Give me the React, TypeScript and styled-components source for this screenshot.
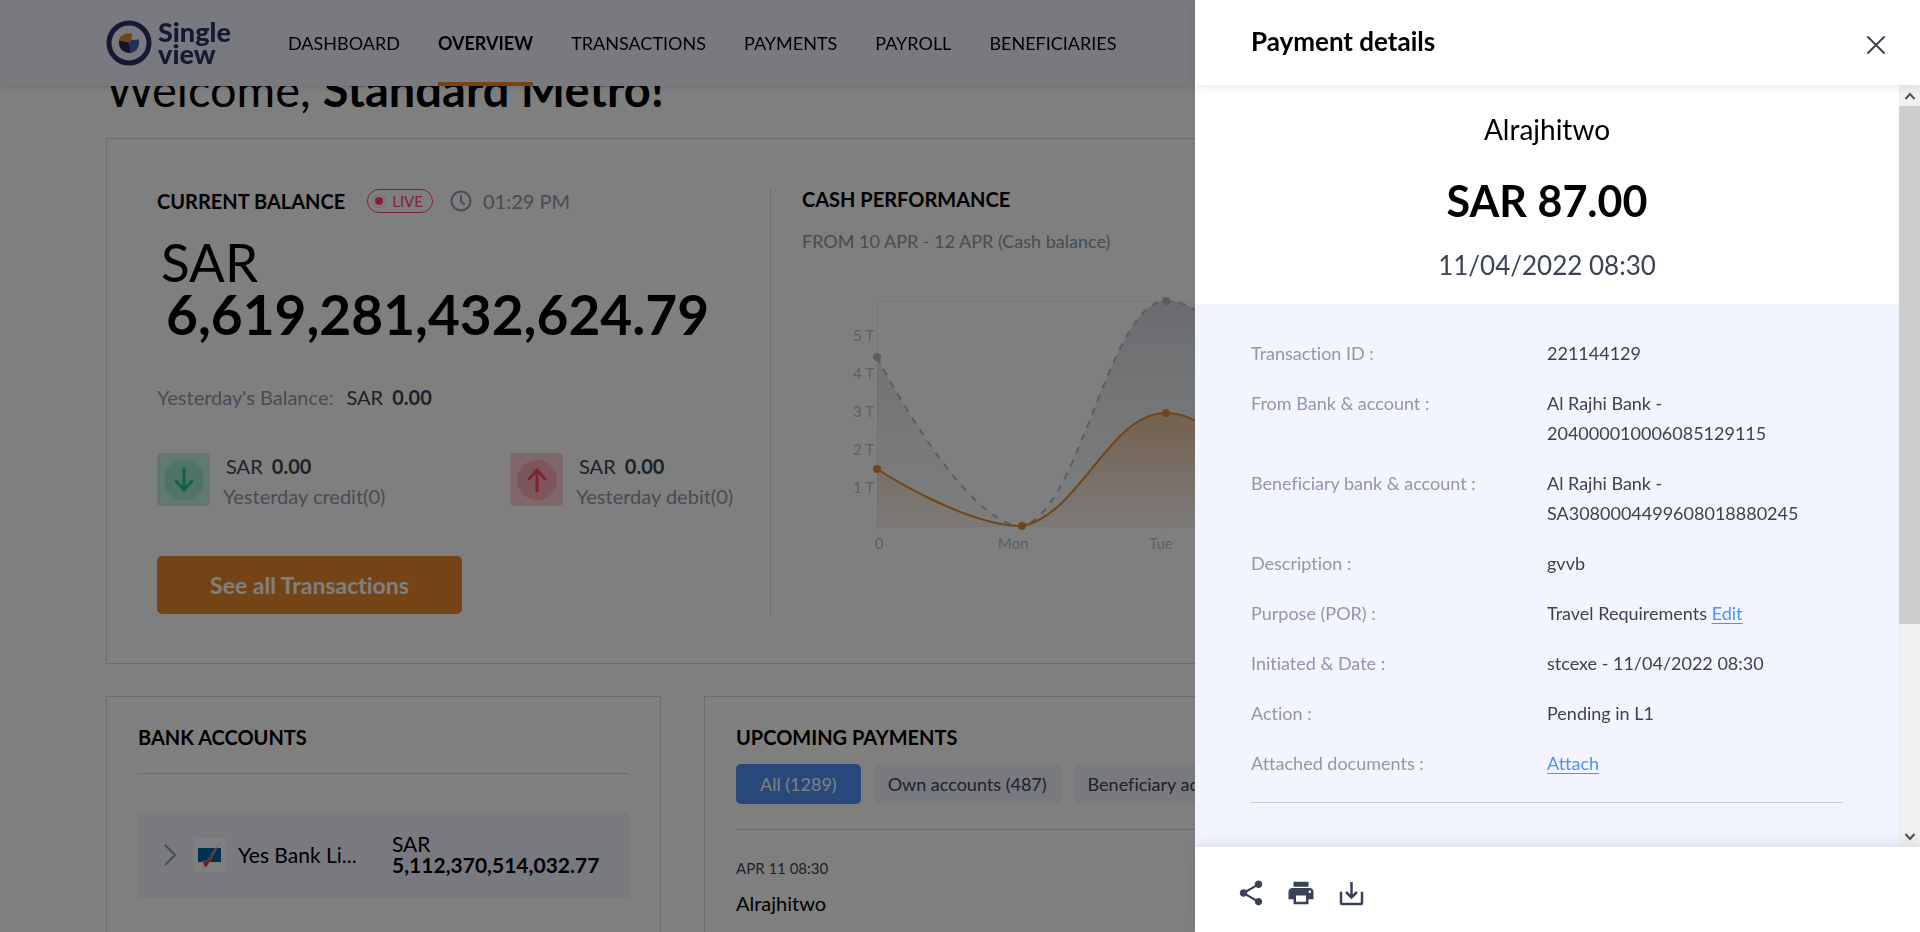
import React from "react";
import styled, { createGlobalStyle, css } from "styled-components";
import { MdPrint, MdShare } from "react-icons/md";

const ink = "#3a4354";
const muted = "#8e98aa";
const line = "#d3d6df";
const pale = "#f2f5fe";
const orange = "#e8892c";
const blue = "#5090f8";
const red = "#ff4468";

const GlobalStyle = createGlobalStyle`
  *, *::before, *::after { box-sizing: border-box; }
  html, body { margin: 0; height: 100%; }
  body {
    font-family: Lato, "Liberation Sans", sans-serif;
    font-variant-ligatures: none;
    color: #000;
    background: #fff;
    overflow: hidden;
  }
  button { font-family: inherit; font-variant-ligatures: none; cursor: pointer; }
  h1, h2, h3, p, dl, dd, dt { margin: 0; }
`;

const Page = styled.div`
  height: 100vh;
  overflow: hidden;
`;

const TopBar = styled.header`
  position: fixed;
  inset: 0 0 auto 0;
  z-index: 2;
  display: flex;
  height: 86px;
  padding: 0 106px;
  gap: 56px;
  background: ${pale};
  box-shadow: 0 1px 8px rgba(0, 0, 0, 0.14);
`;

const Brand = styled.a`
  display: flex;
  align-items: center;
  gap: 6px;
  color: #2c3262;
  text-decoration: none;
`;

const BrandName = styled.span`
  width: 74px;
  font-size: 27px;
  font-weight: 900;
  line-height: 22px;
`;

const Nav = styled.nav`
  display: flex;
  gap: 38px;
`;

const NavLink = styled.a<{ $active?: boolean }>`
  display: flex;
  align-items: center;
  padding-top: 3px;
  border-bottom: 4px solid ${(p) => (p.$active ? orange : "transparent")};
  color: #000;
  font-size: 18px;
  font-weight: ${(p) => (p.$active ? 700 : 400)};
  text-decoration: none;
`;

const Main = styled.main`
  padding: 59px 106px 0;
`;

const Title = styled.h1`
  margin-bottom: 19px;
  font-size: 47px;
  font-weight: 400;
  line-height: 60px;
  white-space: nowrap;
`;

const Card = styled.section`
  border: 1px solid ${line};
  background: #fff;
`;

const SummaryCard = styled(Card)`
  display: flex;
  padding: 50px 50px 49px;
  margin-bottom: 32px;
`;

const Balance = styled.div`
  flex: 0 0 614px;
  border-right: 1px solid ${line};
`;

const Cash = styled.div`
  flex: 1;
  min-width: 0;
  padding-left: 31px;
  overflow: hidden;
`;

const Heading = styled.h2`
  font-size: 20px;
  font-weight: 700;
  line-height: 20px;
`;

const HeadingRow = styled.div`
  display: flex;
  align-items: center;
  height: 24px;
  margin-bottom: 23px;
`;

const LivePill = styled.span`
  display: flex;
  align-items: center;
  gap: 7px;
  height: 24px;
  margin: 0 17px 0 22px;
  padding: 0 9px 0 5px;
  border: 1px solid ${red};
  border-radius: 12px;
  color: ${red};
  font-size: 15px;
`;

const LiveDot = styled.i`
  width: 12px;
  height: 12px;
  border: 2px solid #fff;
  border-radius: 50%;
  background: ${red};
  box-shadow: 0 0 0 1px #eadde2;
`;

const Time = styled.time`
  margin-left: 11px;
  color: ${muted};
  font-size: 20px;
`;

const Total = styled.p`
  padding-left: 4px;
  margin-bottom: 45px;
  font-size: 53px;
  line-height: 52px;
`;

const TotalValue = styled.strong`
  display: block;
  padding-left: 5px;
  font-size: 55px;
`;

const Yesterday = styled.p`
  display: flex;
  gap: 13px;
  margin-bottom: 42px;
  color: ${muted};
  font-size: 20px;
  line-height: 24px;
`;

const Amount = styled.span`
  color: ${ink};
  strong { padding-left: 4px; }
`;

const Stats = styled.div`
  display: grid;
  grid-template-columns: 353px 1fr;
  margin-bottom: 45px;
`;

const Stat = styled.div`
  display: flex;
  gap: 13px;
  color: ${muted};
  font-size: 20px;
  line-height: 30px;
  white-space: nowrap;
  ${Amount} { padding-left: 3px; }
`;

const StatIcon = styled.span<{ $tone: "credit" | "debit" }>`
  display: grid;
  place-items: center;
  width: 53px;
  height: 53px;
  margin-top: 2px;
  border-radius: 4px;
  ${(p) =>
    p.$tone === "credit"
      ? css`background: #c2f3e0; color: #24c48c; --disc: #9fe6cc;`
      : css`background: #ffd0d8; color: ${red}; --disc: #ffaab8;`}
`;

const StatDisc = styled.span`
  display: grid;
  place-items: center;
  width: 40px;
  height: 40px;
  border-radius: 50%;
  background: var(--disc);
`;

const SeeAll = styled.button`
  display: block;
  width: 305px;
  height: 58px;
  border: 0;
  border-radius: 5px;
  background: ${orange};
  color: #fff;
  font-size: 23px;
  font-weight: 700;
`;

const CashPeriod = styled.p`
  margin: 20px 0 24px;
  color: ${muted};
  font-size: 18px;
  line-height: 24px;
`;

const AxisText = styled.text`
  fill: #bcc0ca;
  font-size: 15px;
`;

const LowerRow = styled.div`
  display: grid;
  grid-template-columns: 555px 1fr;
  gap: 43px;
`;

const PanelCard = styled(Card)`
  min-height: 400px;
  padding: 30px 31px;
`;

const Rule = styled.hr`
  height: 1px;
  margin: 0;
  border: 0;
  background: ${line};
`;

const BankRule = styled(Rule)`
  margin: 26px 0 38px;
`;

const BankRow = styled.div`
  display: flex;
  align-items: center;
  height: 86px;
  padding: 0 26px;
  background: ${pale};
  font-size: 21px;
`;

const BankLogo = styled.span`
  display: grid;
  place-items: center;
  width: 33px;
  height: 34px;
  margin: 0 12px 0 17px;
  background: #fff;
`;

const BankName = styled.span`
  width: 124px;
  margin-right: 30px;
  padding-bottom: 2px;
  white-space: nowrap;
`;

const BankAmount = styled.span`
  padding-bottom: 2px;
  line-height: 21px;
  strong { display: block; }
`;

const Tabs = styled.div`
  display: flex;
  gap: 13px;
  margin: 17px 0 25px;
`;

const Tab = styled.button<{ $active?: boolean }>`
  height: 40px;
  padding: 0 ${(p) => (p.$active ? 24 : 14)}px;
  border: 0;
  border-radius: 5px;
  background: ${(p) => (p.$active ? blue : pale)};
  color: ${(p) => (p.$active ? "#fff" : ink)};
  font-size: 18px;
  white-space: nowrap;
`;

const PaymentDate = styled.p`
  margin: 28px 0 13px;
  color: ${ink};
  font-size: 15px;
  line-height: 20px;
`;

const Payee = styled.p`
  font-size: 20px;
  line-height: 24px;
`;

const Backdrop = styled.div`
  position: fixed;
  inset: 0;
  z-index: 3;
  background: rgba(0, 0, 0, 0.5);
`;

const Drawer = styled.aside`
  position: fixed;
  inset: 0 0 0 auto;
  z-index: 4;
  display: flex;
  flex-direction: column;
  width: 725px;
  background: #fff;
`;

const DrawerHeader = styled.header`
  position: relative;
  z-index: 1;
  display: flex;
  align-items: center;
  justify-content: space-between;
  height: 85px;
  padding: 0 34px 0 56px;
  background: #fff;
  box-shadow: 0 2px 10px rgba(40, 50, 80, 0.1);
`;

const DrawerTitle = styled.h2`
  padding-bottom: 3px;
  font-size: 26px;
  font-weight: 700;
  line-height: 28px;
`;

const IconButton = styled.button`
  display: grid;
  place-items: center;
  padding: 0;
  border: 0;
  background: none;
  color: ${ink};
`;

const CloseButton = styled(IconButton)`
  padding-top: 5px;
`;

const DrawerBody = styled.div`
  display: flex;
  flex: 1;
  min-height: 0;
`;

const DrawerContent = styled.div`
  display: flex;
  flex: 1;
  flex-direction: column;
  overflow: hidden;
`;

const Hero = styled.div`
  display: flex;
  flex-direction: column;
  align-items: center;
  padding: 27px 0 22px;
`;

const HeroText = styled.p`
  font-size: 28px;
  line-height: 34px;
`;

const HeroDate = styled.p`
  color: ${ink};
  font-size: 26px;
  line-height: 34px;
`;

const HeroAmount = styled.p`
  margin: 30px 0 22px;
  font-size: 43px;
  font-weight: 700;
  line-height: 50px;
`;

const Details = styled.div`
  flex: 1;
  padding: 34px 56px 0;
  background: ${pale};
`;

const DetailList = styled.dl`
  display: grid;
  grid-template-columns: 1fr 1fr;
  row-gap: 20px;
  margin-bottom: 24px;
  font-size: 18px;
  line-height: 30px;
`;

const Term = styled.dt`
  color: ${muted};
`;

const Value = styled.dd`
  color: ${ink};
  a { color: ${blue}; text-underline-offset: 3px; }
`;

const DetailRule = styled(Rule)`
  background: #c4c9d6;
`;

const ScrollBar = styled.div`
  display: flex;
  flex-direction: column;
  width: 21px;
  background: #f0f0f0;
`;

const ScrollArrow = styled.span`
  display: grid;
  place-items: center;
  height: 21px;
`;

const ScrollTrack = styled.div`
  flex: 1;
`;

const ScrollThumb = styled.div`
  height: 72%;
  background: #cdcdcd;
`;

const DrawerFooter = styled.footer`
  position: relative;
  z-index: 1;
  display: flex;
  align-items: center;
  gap: 20px;
  height: 85px;
  padding: 6px 41px 0;
  background: #fff;
  box-shadow: 0 -2px 12px rgba(40, 50, 80, 0.12);
`;

const navItems = ["DASHBOARD", "OVERVIEW", "TRANSACTIONS", "PAYMENTS", "PAYROLL", "BENEFICIARIES"];

const details: { label: string; value: React.ReactNode }[] = [
  { label: "Transaction ID :", value: "221144129" },
  { label: "From Bank & account :", value: <>Al Rajhi Bank -<br />204000010006085129115</> },
  { label: "Beneficiary bank & account :", value: <>Al Rajhi Bank -<br />SA3080004499608018880245</> },
  { label: "Description :", value: "gvvb" },
  { label: "Purpose (POR) :", value: <>Travel Requirements <a href="#edit">Edit</a></> },
  { label: "Initiated & Date :", value: "stcexe - 11/04/2022 08:30" },
  { label: "Action :", value: "Pending in L1" },
  { label: "Attached documents :", value: <a href="#attach">Attach</a> },
];

const LogoMark = () => (
  <svg width="46" height="46" viewBox="0 0 46 46" aria-hidden="true">
    <circle cx="23" cy="23" r="20" fill="none" stroke="#2c3262" strokeWidth="5" />
    <path d="M23.500 22.500 L13 20.500 C14 15.500 19 12.500 26 13.500 L25.500 20 Z" fill={orange} />
    <path d="M23.500 22.500 L13 20.500 C12 28 17 33.500 24.500 33 Z" fill="#262a54" />
    <path d="M23.500 22.500 L25.500 20 L33 19.500 C34 27 30 32.500 24.500 33 Z" fill="#3f64b8" />
  </svg>
);

const ArrowIcon = ({ up }: { up?: boolean }) => (
  <svg width="24" height="28" viewBox="0 0 24 28" fill="none" stroke="currentColor" strokeWidth="3" strokeLinecap="round" strokeLinejoin="round" aria-hidden="true">
    {up ? <path d="M12 25 V4 M4 13 L12 4 L20 13" /> : <path d="M12 3 V24 M4 15 L12 24 L20 15" />}
  </svg>
);

const CashChart = () => (
  <svg width="760" height="300" viewBox="0 0 760 300" role="img" aria-label="Cash balance chart">
    <defs>
      <linearGradient id="previous" x1="0" y1="0" x2="0" y2="1">
        <stop offset="0" stopColor="#8e98aa" stopOpacity="0.38" />
        <stop offset="1" stopColor="#c8d4d4" stopOpacity="0.1" />
      </linearGradient>
      <linearGradient id="current" x1="0" y1="0" x2="0" y2="1">
        <stop offset="0" stopColor={orange} stopOpacity="0.45" />
        <stop offset="1" stopColor="#f0d8c8" stopOpacity="0.25" />
      </linearGradient>
    </defs>
    <path d="M75.500 24.500 H700 M75.500 24.500 V256 M75.500 249.500 H700 M220.500 249 V256 M364.500 249 V256" stroke="#eceef2" fill="none" />
    <path d="M75 80 C75 80 162 249 220 249 C278 236 307 24 364 24 C422 24 451 120 509 120 V249 H75 Z" fill="url(#previous)" />
    <path d="M75 80 C75 80 162 249 220 249 C278 236 307 24 364 24 C422 24 451 120 509 120" fill="none" stroke="#b4bac6" strokeWidth="2" strokeDasharray="7 7" />
    <path d="M75 192 C75 192 162 249 220 249 C278 238 307 136 364 136 C422 136 451 220 509 220 V249 H75 Z" fill="url(#current)" />
    <path d="M75 192 C75 192 162 249 220 249 C278 238 307 136 364 136 C422 136 451 220 509 220" fill="none" stroke={orange} strokeWidth="2" />
    <g fill="#b4bac6">
      <circle cx="75" cy="80" r="4" />
      <circle cx="364" cy="24" r="4" />
    </g>
    <g fill={orange}>
      <circle cx="75" cy="192" r="4" />
      <circle cx="220" cy="249" r="4" />
      <circle cx="364" cy="136" r="4" />
    </g>
    {[5, 4, 3, 2, 1].map((n, i) => (
      <AxisText key={n} x="72" y={64 + i * 38} textAnchor="end">{n} T</AxisText>
    ))}
    <AxisText x="77" y="272" textAnchor="middle">0</AxisText>
    <AxisText x="211" y="272" textAnchor="middle">Mon</AxisText>
    <AxisText x="359" y="272" textAnchor="middle">Tue</AxisText>
  </svg>
);

export default function App() {
  return (
    <>
      <GlobalStyle />
      <Page>
        <TopBar>
          <Brand href="#home">
            <LogoMark />
            <BrandName>Single view</BrandName>
          </Brand>
          <Nav>
            {navItems.map((item) => (
              <NavLink key={item} href={"#" + item.toLowerCase()} $active={item === "OVERVIEW"}>
                {item}
              </NavLink>
            ))}
          </Nav>
        </TopBar>

        <Main>
          <Title>Welcome, <strong>Standard Metro!</strong></Title>

          <SummaryCard>
            <Balance>
              <HeadingRow>
                <Heading>CURRENT BALANCE</Heading>
                <LivePill><LiveDot />LIVE</LivePill>
                <svg width="22" height="22" viewBox="0 0 22 22" fill="none" stroke={muted} strokeWidth="2" strokeLinecap="round" aria-hidden="true">
                  <circle cx="11" cy="11" r="9.500" />
                  <path d="M11 6 V11.500 L14 14" />
                </svg>
                <Time>01:29 PM</Time>
              </HeadingRow>
              <Total>SAR <TotalValue>6,619,281,432,624.79</TotalValue></Total>
              <Yesterday>Yesterday's Balance: <Amount>SAR <strong>0.00</strong></Amount></Yesterday>
              <Stats>
                <Stat>
                  <StatIcon $tone="credit"><StatDisc><ArrowIcon /></StatDisc></StatIcon>
                  <div><Amount>SAR <strong>0.00</strong></Amount><p>Yesterday credit(0)</p></div>
                </Stat>
                <Stat>
                  <StatIcon $tone="debit"><StatDisc><ArrowIcon up /></StatDisc></StatIcon>
                  <div><Amount>SAR <strong>0.00</strong></Amount><p>Yesterday debit(0)</p></div>
                </Stat>
              </Stats>
              <SeeAll type="button">See all Transactions</SeeAll>
            </Balance>
            <Cash>
              <Heading>CASH PERFORMANCE</Heading>
              <CashPeriod>FROM 10 APR - 12 APR (Cash balance)</CashPeriod>
              <CashChart />
            </Cash>
          </SummaryCard>

          <LowerRow>
            <PanelCard>
              <Heading>BANK ACCOUNTS</Heading>
              <BankRule />
              <BankRow>
                <svg width="12" height="22" viewBox="0 0 12 22" fill="none" stroke={muted} strokeWidth="2" strokeLinecap="round" aria-hidden="true">
                  <path d="M1.500 1.500 L11 11 L1.500 20.500" />
                </svg>
                <BankLogo>
                  <svg width="24" height="24" viewBox="0 0 24 24" aria-hidden="true">
                    <rect x="0" y="5" width="23" height="14" fill="#00629e" />
                    <path d="M4.500 18 L8.500 18.500 L21.500 0 L11 20 L8.500 24 L6.500 24 Z" fill="#e23038" stroke="#e8d8dc" strokeWidth="0.600" />
                  </svg>
                </BankLogo>
                <BankName>Yes Bank Li...</BankName>
                <BankAmount>SAR <strong>5,112,370,514,032.77</strong></BankAmount>
              </BankRow>
            </PanelCard>

            <PanelCard>
              <Heading>UPCOMING PAYMENTS</Heading>
              <Tabs>
                <Tab type="button" $active>All (1289)</Tab>
                <Tab type="button">Own accounts (487)</Tab>
                <Tab type="button">Beneficiary accounts (802)</Tab>
              </Tabs>
              <Rule />
              <PaymentDate>APR 11 08:30</PaymentDate>
              <Payee>Alrajhitwo</Payee>
            </PanelCard>
          </LowerRow>
        </Main>
      </Page>

      <Backdrop />

      <Drawer role="dialog" aria-labelledby="drawer-title">
        <DrawerHeader>
          <DrawerTitle id="drawer-title">Payment details</DrawerTitle>
          <CloseButton type="button" aria-label="Close">
            <svg width="20" height="20" viewBox="0 0 20 20" fill="none" stroke="currentColor" strokeWidth="2" strokeLinecap="round" aria-hidden="true">
              <path d="M2 2 L18 18 M18 2 L2 18" />
            </svg>
          </CloseButton>
        </DrawerHeader>
        <DrawerBody>
          <DrawerContent>
            <Hero>
              <HeroText>Alrajhitwo</HeroText>
              <HeroAmount>SAR 87.00</HeroAmount>
              <HeroDate>11/04/2022 08:30</HeroDate>
            </Hero>
            <Details>
              <DetailList>
                {details.map((d) => (
                  <React.Fragment key={d.label}>
                    <Term>{d.label}</Term>
                    <Value>{d.value}</Value>
                  </React.Fragment>
                ))}
              </DetailList>
              <DetailRule />
            </Details>
          </DrawerContent>
          <ScrollBar aria-hidden="true">
            <ScrollArrow>
              <svg width="12" height="10" viewBox="0 0 12 10" fill="none" stroke="#505050" strokeWidth="2"><path d="M1.500 8 L6 3 L10.500 8" /></svg>
            </ScrollArrow>
            <ScrollTrack><ScrollThumb /></ScrollTrack>
            <ScrollArrow>
              <svg width="12" height="10" viewBox="0 0 12 10" fill="none" stroke="#505050" strokeWidth="2"><path d="M1.500 2 L6 7 L10.500 2" /></svg>
            </ScrollArrow>
          </ScrollBar>
        </DrawerBody>
        <DrawerFooter>
          <IconButton type="button" aria-label="Share"><MdShare size={30} /></IconButton>
          <IconButton type="button" aria-label="Print"><MdPrint size={30} /></IconButton>
          <IconButton type="button" aria-label="Download">
            <svg width="30" height="30" viewBox="0 0 30 30" fill="none" stroke="currentColor" strokeWidth="2.500" aria-hidden="true">
              <path d="M5 15 V25 Q5 26 6 26 H25 Q26 26 26 25 V15" strokeLinecap="square" />
              <path d="M15.500 4 V19 M10 14 L15.500 19.500 L21 14" />
            </svg>
          </IconButton>
        </DrawerFooter>
      </Drawer>
    </>
  );
}
